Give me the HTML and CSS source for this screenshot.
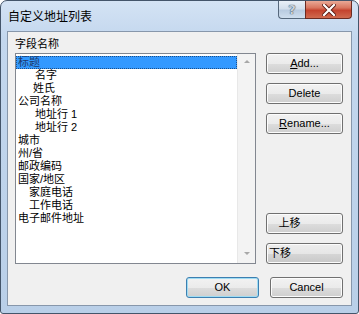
FILE: index.html
```html
<!DOCTYPE html>
<html lang="zh-CN">
  <head>
    <meta charset="UTF-8" />
    <meta name="viewport" content="width=device-width, initial-scale=1.0" />
    <title>自定义地址列表</title>
    <link rel="stylesheet" href="styles.css">
  </head>
  <body>
    <div class="window">
      <!-- 标题栏 -->
      <div class="titlebar">
        <span class="title">自定义地址列表</span>
        <div class="caption-buttons">
          <span class="cap-btn cap-help">?</span>
          <span class="cap-btn cap-close">
            <svg width="14" height="12" viewBox="0 0 14 12">
              <path d="M2 1 L12 11 M12 1 L2 11" stroke="#5a1a12" stroke-width="4" stroke-linecap="square"></path>
              <path d="M2 1 L12 11 M12 1 L2 11" stroke="#ffffff" stroke-width="2.2" stroke-linecap="square"></path>
            </svg>
          </span>
        </div>
      </div>

      <div class="client">
        <div class="main">
          <div class="fields">
            <div class="fields-label">字段名称</div>
            <div class="listbox">
              <ul class="items">
                <li class="item selected">标题</li>
                <li class="item indent-19">名字</li>
                <li class="item indent-17">姓氏</li>
                <li class="item">公司名称</li>
                <li class="item indent-19">地址行 1</li>
                <li class="item indent-19">地址行 2</li>
                <li class="item">城市</li>
                <li class="item">州/省</li>
                <li class="item">邮政编码</li>
                <li class="item">国家/地区</li>
                <li class="item indent-13">家庭电话</li>
                <li class="item indent-13">工作电话</li>
                <li class="item">电子邮件地址</li>
              </ul>
              <!-- 禁用状态的滚动条 -->
              <div class="scrollbar">
                <span class="arrow arrow-up"></span>
                <span class="arrow arrow-down"></span>
              </div>
            </div>
          </div>

          <div class="actions">
            <div class="btn-group">
              <button class="btn"><u>A</u>dd...</button>
              <button class="btn">Delete</button>
              <button class="btn"><u>R</u>ename...</button>
            </div>
            <div class="btn-group">
              <button class="btn btn-up">上移</button>
              <button class="btn btn-down">下移</button>
            </div>
          </div>
        </div>

        <div class="footer">
          <button class="btn btn-default">OK</button>
          <button class="btn">Cancel</button>
        </div>
      </div>
    </div>
  </body>
</html>
```

FILE: styles.css
```css
* {
  box-sizing: border-box;
}

body {
  margin: 0;
  background: #ffffff;
  font-family: "Liberation Sans", "Noto Sans CJK SC", sans-serif;
  font-size: 11px;
  color: #000;
}

/* 窗口外框 */
.window {
  width: 359px;
  height: 314px;
  border: 1px solid #44556a;
  border-radius: 7px 7px 3px 3px;
  padding: 0 6px 7px 6px;
  background: linear-gradient(to bottom, #d4e3f4 0%, #c3d7ee 12%, #b9cfe8 100%);
  display: flex;
  flex-direction: column;
  overflow: hidden;
}

.titlebar {
  height: 30px;
  display: flex;
  align-items: flex-start;
  flex: 0 0 30px;
}

.title {
  margin: 6px 0 0 1px;
  font-family: "Noto Sans CJK SC", sans-serif;
  font-size: 12px;
  line-height: 17px;
  color: #000;
}

.caption-buttons {
  margin-left: auto;
  display: flex;
}

.cap-btn {
  height: 18px;
  display: flex;
  align-items: center;
  justify-content: center;
  border: 1px solid #56687c;
  border-top: none;
}

.cap-help {
  width: 27px;
  border-right: none;
  border-radius: 0 0 0 4px;
  background: linear-gradient(to bottom, #e9f0f8 0%, #d3dfec 45%, #b9cbe0 55%, #cfdeee 100%);
  font-family: "DejaVu Sans", sans-serif;
  font-weight: bold;
  font-size: 13px;
  color: #c9d2dc;
  text-shadow: 0 0 1px #3a4a5c, 0 0 1px #3a4a5c;
}

.cap-close {
  width: 47px;
  border-radius: 0 0 4px 0;
  border-color: #6b2b22;
  background: linear-gradient(to bottom, #e9a996 0%, #d8765f 40%, #c4432e 55%, #d06a4f 100%);
}

/* 客户区 */
.client {
  flex: 1;
  border: 1px solid #8797ab;
  background: #f0f0f0;
  display: flex;
  flex-direction: column;
}

.main {
  height: 232px;
  display: flex;
  padding: 0 8px 0 7px;
}

.fields {
  width: 241px;
  display: flex;
  flex-direction: column;
}

.fields-label {
  margin-top: 5px;
  margin-bottom: 2px;
  line-height: 14px;
  height: 14px;
}

.listbox {
  flex: 1;
  display: flex;
  background: #ffffff;
  border: 1px solid #828790;
}

.items {
  list-style: none;
  margin: 0;
  padding: 2px 0 0 0;
  flex: 1;
}

.item {
  height: 13px;
  line-height: 13px;
  padding-left: 2px;
  white-space: nowrap;
}

.indent-13 {
  padding-left: 13px;
}

.indent-17 {
  padding-left: 17px;
}

.indent-19 {
  padding-left: 19px;
}

.item.selected {
  background: #3399ff;
  color: #1d3a6b;
  outline: 1px dotted #1b4f8a;
  outline-offset: -1px;
}

.scrollbar {
  width: 18px;
  background: #f3f3f3;
  border-left: 1px solid #e8e8e8;
  display: flex;
  flex-direction: column;
  justify-content: space-between;
  align-items: center;
  padding: 6px 0 8px 0;
}

.arrow {
  width: 0;
  height: 0;
  border-left: 3px solid transparent;
  border-right: 3px solid transparent;
}

.arrow-up {
  border-bottom: 3px solid #a8a8a8;
}

.arrow-down {
  border-top: 3px solid #a8a8a8;
}

/* 右侧按钮列 */
.actions {
  width: 77px;
  margin-left: 10px;
  padding-top: 21px;
  display: flex;
  flex-direction: column;
  justify-content: space-between;
}

.btn-group {
  display: flex;
  flex-direction: column;
  gap: 9px;
}

.btn {
  height: 21px;
  width: 77px;
  border: 1px solid #707070;
  border-radius: 3px;
  background: linear-gradient(to bottom, #f2f2f2 0%, #ebebeb 50%, #dddddd 51%, #cfcfcf 100%);
  box-shadow: inset 0 0 0 1px #fcfcfc;
  font-family: "Liberation Sans", "Noto Sans CJK SC", sans-serif;
  font-size: 11px;
  line-height: 17px;
  color: #000;
  padding: 0;
  text-align: center;
}

.btn u {
  text-underline-offset: 1px;
}

.btn-up {
  padding-right: 30px;
}

.btn-down {
  text-align: left;
  padding-left: 2px;
  background: linear-gradient(to bottom, #eeeeee 0%, #e6e6e6 50%, #d6d6d6 51%, #c8c8c8 100%);
}

.footer {
  display: flex;
  justify-content: flex-end;
  gap: 11px;
  margin-top: 13px;
  padding-right: 8px;
}

.footer .btn {
  width: 73px;
}

.btn-default {
  border-color: #3c7fb1;
  box-shadow: inset 0 0 0 1px #9fdcf3;
}
```
